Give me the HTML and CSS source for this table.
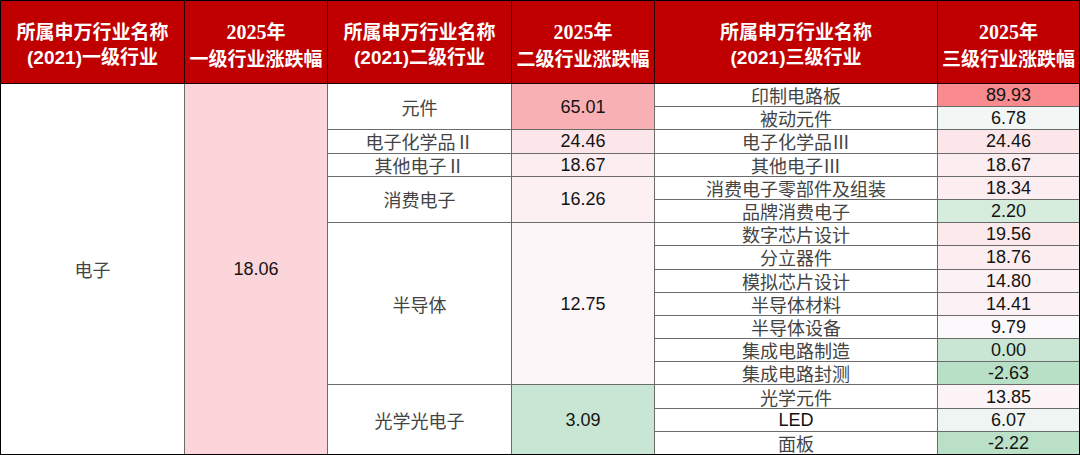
FILE: index.html
```html
<!DOCTYPE html>
<html lang="zh-CN">
<head>
<meta charset="utf-8">
<title>申万电子行业涨跌幅</title>
<link rel="stylesheet" href="styles.css">
</head>
<body>
<div class="table">
  <div class="head">
    <div class="hcell"><span>所属申万行业名称</span><span><b class="lat">(2021)</b>一级行业</span></div>
    <div class="hcell"><span><b class="num">2025</b>年</span><span>一级行业涨跌幅</span></div>
    <div class="hcell"><span>所属申万行业名称</span><span><b class="lat">(2021)</b>二级行业</span></div>
    <div class="hcell"><span><b class="num">2025</b>年</span><span>二级行业涨跌幅</span></div>
    <div class="hcell"><span>所属申万行业名称</span><span><b class="lat">(2021)</b>三级行业</span></div>
    <div class="hcell"><span><b class="num">2025</b>年</span><span>三级行业涨跌幅</span></div>
  </div>
  <div class="body">
    <div class="cell c1 span16 name">电子</div>
    <div class="cell c2 span16 val v-1806">18.06</div>

    <div class="cell c3 span2 name">元件</div>
    <div class="cell c4 span2 val v-6501">65.01</div>
    <div class="cell c5 name">印制电路板</div>
    <div class="cell c6 val v-8993">89.93</div>
    <div class="cell c5 name">被动元件</div>
    <div class="cell c6 val v-678">6.78</div>

    <div class="cell c3 name">电子化学品Ⅱ</div>
    <div class="cell c4 val v-2446">24.46</div>
    <div class="cell c5 name">电子化学品Ⅲ</div>
    <div class="cell c6 val v-2446">24.46</div>

    <div class="cell c3 name">其他电子Ⅱ</div>
    <div class="cell c4 val v-1867">18.67</div>
    <div class="cell c5 name">其他电子Ⅲ</div>
    <div class="cell c6 val v-1867">18.67</div>

    <div class="cell c3 span2 name">消费电子</div>
    <div class="cell c4 span2 val v-1626">16.26</div>
    <div class="cell c5 name">消费电子零部件及组装</div>
    <div class="cell c6 val v-1834">18.34</div>
    <div class="cell c5 name">品牌消费电子</div>
    <div class="cell c6 val v-220">2.20</div>

    <div class="cell c3 span7 name">半导体</div>
    <div class="cell c4 span7 val v-1275">12.75</div>
    <div class="cell c5 name">数字芯片设计</div>
    <div class="cell c6 val v-1956">19.56</div>
    <div class="cell c5 name">分立器件</div>
    <div class="cell c6 val v-1876">18.76</div>
    <div class="cell c5 name">模拟芯片设计</div>
    <div class="cell c6 val v-1480">14.80</div>
    <div class="cell c5 name">半导体材料</div>
    <div class="cell c6 val v-1441">14.41</div>
    <div class="cell c5 name">半导体设备</div>
    <div class="cell c6 val v-979">9.79</div>
    <div class="cell c5 name">集成电路制造</div>
    <div class="cell c6 val v-000">0.00</div>
    <div class="cell c5 name">集成电路封测</div>
    <div class="cell c6 val v-m263">-2.63</div>

    <div class="cell c3 span3 name">光学光电子</div>
    <div class="cell c4 span3 val v-309">3.09</div>
    <div class="cell c5 name">光学元件</div>
    <div class="cell c6 val v-1385">13.85</div>
    <div class="cell c5 name latin">LED</div>
    <div class="cell c6 val v-607">6.07</div>
    <div class="cell c5 name">面板</div>
    <div class="cell c6 val v-m222">-2.22</div>
  </div>
</div>
</body>
</html>
```

FILE: styles.css
```css
* { box-sizing: border-box; }
html, body { margin: 0; padding: 0; background: #fff; }

.table {
  width: 1080px;
  height: 455px;
  border: 1px solid #000;
  display: flex;
  flex-direction: column;
  font-family: "Noto Sans CJK SC", "Liberation Sans", sans-serif;
}

.head {
  display: grid;
  grid-template-columns: 183px 142px 183px 142px 282px 141px;
  column-gap: 1px;
  height: 83px;
  background: #2a0000;
  border-bottom: 1px solid #1a0000;
}

.hcell {
  background: #c00000;
  color: #fff;
  display: flex;
  flex-direction: column;
  align-items: center;
  justify-content: center;
  font-size: 19px;
  line-height: 25px;
  font-weight: 700;
  padding-top: 3px;
  white-space: nowrap;
}

.hcell .lat {
  font-family: "Liberation Sans", sans-serif;
  font-weight: 700;
}
.hcell .num {
  font-family: "Liberation Serif", serif;
  font-weight: 700;
  font-size: 20px;
}

.body {
  flex: 1;
  display: grid;
  grid-template-columns: 183px 142px 183px 142px 282px 141px;
  grid-template-rows: repeat(16, 1fr);
  gap: 1px;
  background: #6b6b6b;
}

.cell {
  background: #fff;
  display: flex;
  align-items: center;
  justify-content: center;
  white-space: nowrap;
  font-size: 18px;
  line-height: 1;
}

.c1 { grid-column: 1; }
.c2 { grid-column: 2; }
.c3 { grid-column: 3; }
.c4 { grid-column: 4; }
.c5 { grid-column: 5; }
.c6 { grid-column: 6; }

.span2 { grid-row: span 2; }
.span3 { grid-row: span 3; }
.span7 { grid-row: span 7; }
.span16 { grid-row: span 16; }

.name {
  color: #444;
  font-family: "Noto Sans CJK SC", sans-serif;
  font-weight: 400;
}
.name.latin {
  font-family: "Liberation Sans", sans-serif;
  color: #111;
}

.val {
  font-family: "Liberation Sans", Arial, sans-serif;
  color: #141414;
  font-size: 18px;
}

.v-1806 { background: #fbd5d9; }
.v-6501 { background: #f9b0b4; }
.v-8993 { background: #f98a8d; }
.v-678  { background: #f2f6f4; }
.v-2446 { background: #fce6e9; }
.v-1867 { background: #fcedf0; }
.v-1626 { background: #fcf0f3; }
.v-1834 { background: #fcedf0; }
.v-220  { background: #d6ecdd; }
.v-1275 { background: #fcf6f9; }
.v-1956 { background: #fce9ec; }
.v-1876 { background: #fcedf0; }
.v-1480 { background: #fcf1f4; }
.v-1441 { background: #fcf2f5; }
.v-979  { background: #fcf9fc; }
.v-000  { background: #c8e6d3; }
.v-m263 { background: #b7e0c6; }
.v-309  { background: #c8e6d3; }
.v-1385 { background: #fcf4f7; }
.v-607  { background: #eff5f2; }
.v-m222 { background: #bae1c8; }
```
